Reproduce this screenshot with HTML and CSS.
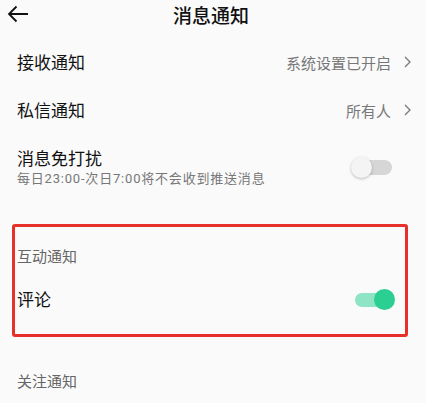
FILE: index.html
```html
<!DOCTYPE html>
<html lang="zh-CN">
<head>
    <meta charset="UTF-8">
    <meta name="viewport" content="width=device-width, initial-scale=1.0">
    <title>消息通知</title>
    <link rel="stylesheet" href="styles.css">
</head>
<body>
    <div class="header">
        <svg class="back" width="22" height="18" viewBox="0 0 22 18">
            <path d="M21 9H2M9.5 1.5L2 9l7.5 7.5" fill="none" stroke="#111" stroke-width="1.8"/>
        </svg>
        <div class="title">消息通知</div>
    </div>

    <div class="row row-first">
        <div class="label">接收通知</div>
        <div class="value">系统设置已开启</div>
        <svg class="arrow" width="7" height="12" viewBox="0 0 7 12"><path d="M1 1l5 5-5 5" fill="none" stroke="#777" stroke-width="1.3"/></svg>
    </div>
    <div class="row">
        <div class="label">私信通知</div>
        <div class="value">所有人</div>
        <svg class="arrow" width="7" height="12" viewBox="0 0 7 12"><path d="M1 1l5 5-5 5" fill="none" stroke="#777" stroke-width="1.3"/></svg>
    </div>
    <div class="row row-tall">
        <div class="text">
            <div class="label">消息免打扰</div>
            <div class="sub">每日23:00-次日7:00将不会收到推送消息</div>
        </div>
        <div class="switch"><span class="track"></span><span class="knob"></span></div>
    </div>

    <div class="mark">
        <div class="group">互动通知</div>
        <div class="row row-in">
            <div class="label">评论</div>
            <div class="switch on"><span class="track"></span><span class="knob"></span></div>
        </div>
    </div>

    <div class="group group-last">关注通知</div>
</body>
</html>
```

FILE: styles.css
```css
*{
    margin: 0;
    padding: 0;
    box-sizing: border-box;
}
body{
    background-color: #fafafa;
    font-family: "Noto Sans CJK SC", "Noto Sans", sans-serif;
    color: #111;
}
/* 顶部标题栏 */
.header{
    height: 30px;
    position: relative;
    display: flex;
    align-items: center;
    justify-content: center;
}
.back{
    position: absolute;
    left: 7px;
    top: 5px;
}
.title{
    font-size: 19px;
    font-weight: 500;
    line-height: 28px;
    margin-right: 4px;
}
/* 每一行 */
.row{
    height: 48px;
    display: flex;
    align-items: center;
    padding: 0 15px 0 17px;
}
.row-first{
    margin-top: 8px;
}
.label{
    flex: 1;
    font-size: 17px;
    line-height: 22px;
}
.value{
    font-size: 15px;
    color: #777;
    margin-right: 13px;
}
.row-tall{
    height: 60px;
}
.text{
    flex: 1;
    padding-top: 6px;
}
.sub{
    font-family: "Roboto", "Noto Sans CJK SC", sans-serif;
    font-size: 13px;
    letter-spacing: .8px;
    color: #777;
    line-height: 16px;
    margin-top: 2px;
}
/* 开关 */
.switch{
    width: 44px;
    height: 21px;
    position: relative;
    margin-right: 16px;
    margin-top: 6px;
}
.track{
    position: absolute;
    left: 4px;
    top: 3px;
    width: 37px;
    height: 15px;
    border-radius: 8px;
    background-color: #d6d6d6;
}
.knob{
    position: absolute;
    left: 0;
    top: 0;
    width: 21px;
    height: 21px;
    border-radius: 50%;
    background-color: #f4f4f4;
    box-shadow: 0 1px 3px rgba(0, 0, 0, .25);
}
.switch.on .track{
    background-color: #8ee4c4;
    top: 4px;
    height: 14px;
}
.switch.on .knob{
    left: auto;
    right: 0;
    background-color: #2bcf92;
    box-shadow: none;
}
/* 红色标注框 */
.mark{
    margin: 30px 18px 0 12px;
    height: 113px;
    border: 3px solid #e8302a;
    border-radius: 3px;
    padding-top: 19px;
}
.group{
    font-size: 15px;
    line-height: 20px;
    color: #666;
    padding-left: 2px;
}
.row-in{
    height: 40px;
    margin-top: 13px;
    padding: 0 10px 0 2px;
}
.row-in .switch{
    margin: 0;
}
.group-last{
    margin-top: 34px;
    padding-left: 17px;
}
```
